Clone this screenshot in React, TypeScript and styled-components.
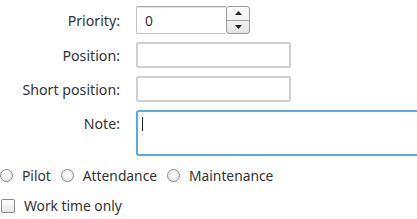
import * as React from 'react';
import styled, { createGlobalStyle } from 'styled-components';

const GlobalStyle = createGlobalStyle`
  html, body {
    margin: 0;
    padding: 0;
    background: #ffffff;
    overflow: hidden;
  }
  body {
    font-family: 'Noto Sans', 'Open Sans', sans-serif;
    font-size: 13.8px;
    color: #333333;
  }
`;

const Page = styled.div`
  width: 417px;
  height: 219px;
  padding-top: 6px;
  box-sizing: border-box;
  overflow: hidden;
`;

const Form = styled.div`
  display: grid;
  grid-template-columns: 120px 1fr;
  column-gap: 16px;
  row-gap: 8px;
  align-items: center;
`;

const Label = styled.label<{ $top?: boolean }>`
  font-size: 14.2px;
  text-align: right;
  white-space: nowrap;
  align-self: ${p => (p.$top ? 'start' : 'center')};
  padding-top: ${p => (p.$top ? '4px' : '0')};
`;

const SpinBox = styled.div`
  display: flex;
  width: 114px;
  height: 28px;
`;

const SpinField = styled.div`
  flex: 1;
  border: 1px solid #c4c4c4;
  border-top-color: #a8a8a8;
  border-right: none;
  border-radius: 2px 0 0 2px;
  box-shadow: inset 0 1px 1px rgba(0, 0, 0, 0.12);
  padding: 0 8px;
  display: flex;
  align-items: center;
  color: #333;
`;

const SpinButtons = styled.div`
  width: 22px;
  display: flex;
  flex-direction: column;
  border: 1px solid #9a9a9a;
  border-radius: 3px;
  background: linear-gradient(#fdfdfd, #e4e4e4);
  overflow: hidden;
`;

const SpinButton = styled.div<{ $down?: boolean }>`
  flex: 1;
  display: flex;
  align-items: center;
  justify-content: center;
  border-top: ${p => (p.$down ? '1px solid #a4a4a4' : 'none')};
  svg { display: block; }
`;

const TextField = styled.div`
  width: 155px;
  height: 26px;
  box-sizing: border-box;
  border: 2px solid #cfcfcf;
  border-radius: 2px;
  background: #fff;
`;

const NoteField = styled.div`
  width: 300px;
  height: 46px;
  box-sizing: border-box;
  border: 2px solid #5aa9e8;
  border-radius: 3px;
  padding: 5px 0 0 4px;
`;

const Caret = styled.div`
  width: 1px;
  height: 14px;
  background: #222;
`;

const Options = styled.div`
  display: flex;
  flex-direction: column;
  gap: 11px;
  margin-top: 10px;
`;

const OptionRow = styled.div`
  display: flex;
  align-items: center;
  gap: 10px;
`;

const Option = styled.div`
  display: flex;
  align-items: center;
  gap: 9px;
`;

const Radio = styled.span`
  width: 11px;
  height: 11px;
  border-radius: 50%;
  border: 1px solid #8a8a8a;
  background: radial-gradient(circle at 50% 35%, #ffffff, #e2e2e2);
  box-sizing: content-box;
`;

const Check = styled.span`
  width: 12px;
  height: 12px;
  margin-left: 1px;
  border: 1px solid #8a8a8a;
  border-radius: 2px;
  background: linear-gradient(#ffffff, #e6e6e6);
`;

const Arrow = ({ down }: { down?: boolean }) => (
  <svg width="7" height="4" viewBox="0 0 7 4">
    <path d={down ? 'M0 0 L7 0 L3.5 4 Z' : 'M0 4 L7 4 L3.5 0 Z'} fill="#222" />
  </svg>
);

export default function App() {
  return (
    <Page>
      <GlobalStyle />
      <Form>
        <Label>Priority:</Label>
        <SpinBox>
          <SpinField>0</SpinField>
          <SpinButtons>
            <SpinButton><Arrow /></SpinButton>
            <SpinButton $down><Arrow down /></SpinButton>
          </SpinButtons>
        </SpinBox>
        <Label>Position:</Label>
        <TextField />
        <Label>Short position:</Label>
        <TextField />
        <Label $top>Note:</Label>
        <NoteField><Caret /></NoteField>
      </Form>
      <Options>
        <OptionRow>
          <Option><Radio />Pilot</Option>
          <Option><Radio />Attendance</Option>
          <Option><Radio />Maintenance</Option>
        </OptionRow>
        <Option><Check />Work time only</Option>
      </Options>
    </Page>
  );
}
